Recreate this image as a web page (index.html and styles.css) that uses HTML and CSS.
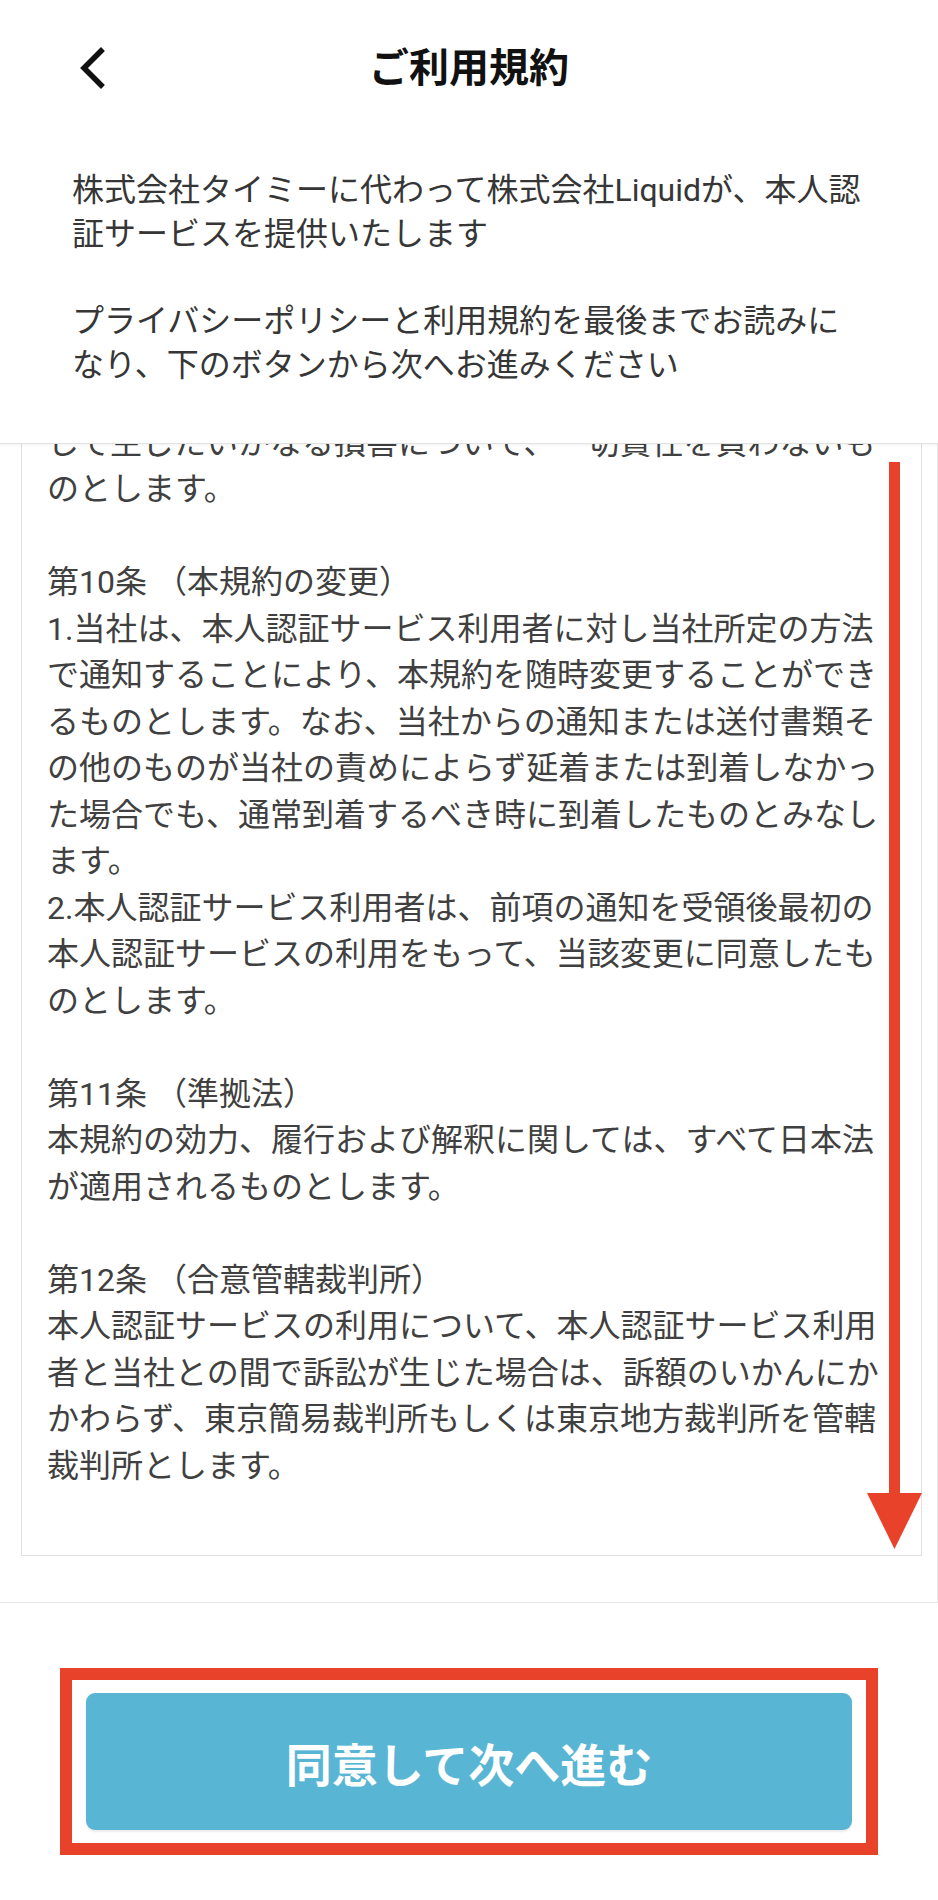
FILE: index.html
```html
<!DOCTYPE html>
<html lang="ja">
<head>
<meta charset="utf-8">
<title>ご利用規約</title>
<link rel="stylesheet" href="styles.css">
</head>
<body>
<div class="page">
  <header class="header">
    <div class="nav">
      <div class="nav-left">
        <svg class="back" width="30" height="44" viewBox="0 0 30 44" aria-hidden="true">
          <polyline points="23,4 6,21 23,38" fill="none" stroke="#111" stroke-width="5.5" stroke-linecap="square" stroke-linejoin="miter"/>
        </svg>
      </div>
      <h1 class="title">ご利用規約</h1>
      <div class="nav-right"></div>
    </div>
    <div class="intro">
      <p>株式会社タイミーに代わって株式会社Liquidが、本人認証サービスを提供いたします</p>
      <p>プライバシーポリシーと利用規約を最後までお読みになり、下のボタンから次へお進みください</p>
    </div>
  </header>

  <main class="scroll">
    <div class="terms">
      <section class="article">
        <div>して生じたいかなる損害について、一切責任を負わないものとします。</div>
      </section>
      <section class="article">
        <div>第10条 （本規約の変更）</div>
        <div>1.当社は、本人認証サービス利用者に対し当社所定の方法で通知することにより、本規約を随時変更することができるものとします。なお、当社からの通知または送付書類その他のものが当社の責めによらず延着または到着しなかった場合でも、通常到着するべき時に到着したものとみなします。</div>
        <div>2.本人認証サービス利用者は、前項の通知を受領後最初の本人認証サービスの利用をもって、当該変更に同意したものとします。</div>
      </section>
      <section class="article">
        <div>第11条 （準拠法）</div>
        <div>本規約の効力、履行および解釈に関しては、すべて日本法が適用されるものとします。</div>
      </section>
      <section class="article">
        <div>第12条 （合意管轄裁判所）</div>
        <div>本人認証サービスの利用について、本人認証サービス利用者と当社との間で訴訟が生じた場合は、訴額のいかんにかかわらず、東京簡易裁判所もしくは東京地方裁判所を管轄裁判所とします。</div>
      </section>
    </div>
  </main>

  <footer class="footer">
    <div class="highlight">
      <button class="agree" type="button">同意して次へ進む</button>
    </div>
  </footer>

  <svg class="arrow" width="70" height="1100" viewBox="860 455 70 1100" aria-hidden="true">
    <rect x="889" y="462" width="11" height="1036" fill="#e8432a"/>
    <polygon points="867,1493 922,1493 894.5,1549" fill="#e8432a"/>
  </svg>
</div>
</body>
</html>
```

FILE: styles.css
```css
* {
  box-sizing: border-box;
}

html, body {
  margin: 0;
  padding: 0;
  background: #ffffff;
}

body {
  font-family: Roboto, "Noto Sans CJK JP", "Noto Sans", sans-serif;
  color: #333333;
}

.page {
  position: relative;
  width: 938px;
  height: 1900px;
  display: flex;
  flex-direction: column;
  overflow: hidden;
}

.header {
  position: relative;
  z-index: 2;
  height: 444px;
  flex: none;
  background: #ffffff;
  border-bottom: 1px solid #e2e2e2;
  box-shadow: 0 1px 3px rgba(0, 0, 0, 0.06);
}

.nav {
  height: 138px;
  display: grid;
  grid-template-columns: 1fr auto 1fr;
  align-items: center;
}

.nav-left {
  padding-left: 78px;
  display: flex;
  align-items: center;
}

.back {
  display: block;
}

.title {
  margin: 0;
  font-size: 40px;
  line-height: 50px;
  font-weight: 700;
  color: #111111;
  letter-spacing: 0;
}

.intro {
  padding: 30px 0 0 72px;
  width: 866px;
}

.intro p {
  margin: 0 0 43px 0;
  font-size: 32px;
  line-height: 44px;
  color: #363636;
}

.scroll {
  flex: none;
  height: 1158px;
  overflow: hidden;
  display: flex;
  flex-direction: column;
  justify-content: flex-end;
  padding: 0 0 46px 21px;
  border-right: 1px solid #e6e6e6;
}

.terms {
  flex: none;
  width: 901px;
  border: 1px solid #e0e0e0;
  border-top: none;
  padding: 0 0 66px 25px;
  background: #ffffff;
}

.article {
  width: 840px;
  font-size: 32px;
  line-height: 46.5px;
  color: #404040;
}

.article + .article {
  margin-top: 46.5px;
}

.footer {
  flex: none;
  border-top: 1px solid #e6e6e6;
  padding-top: 65px;
  display: flex;
  justify-content: center;
}

.highlight {
  width: 818px;
  border: 12px solid #e8432a;
  padding: 13px 14px;
  background: #ffffff;
}

.agree {
  display: block;
  width: 100%;
  height: 137px;
  border: none;
  border-radius: 9px;
  background: #59b5d4;
  color: #ffffff;
  font-family: Roboto, "Noto Sans CJK JP", sans-serif;
  font-size: 46px;
  font-weight: 700;
  letter-spacing: 0;
  box-shadow: 0 2px 2px rgba(0, 0, 0, 0.08);
}

.arrow {
  position: absolute;
  left: 860px;
  top: 455px;
  pointer-events: none;
  z-index: 3;
}
```
